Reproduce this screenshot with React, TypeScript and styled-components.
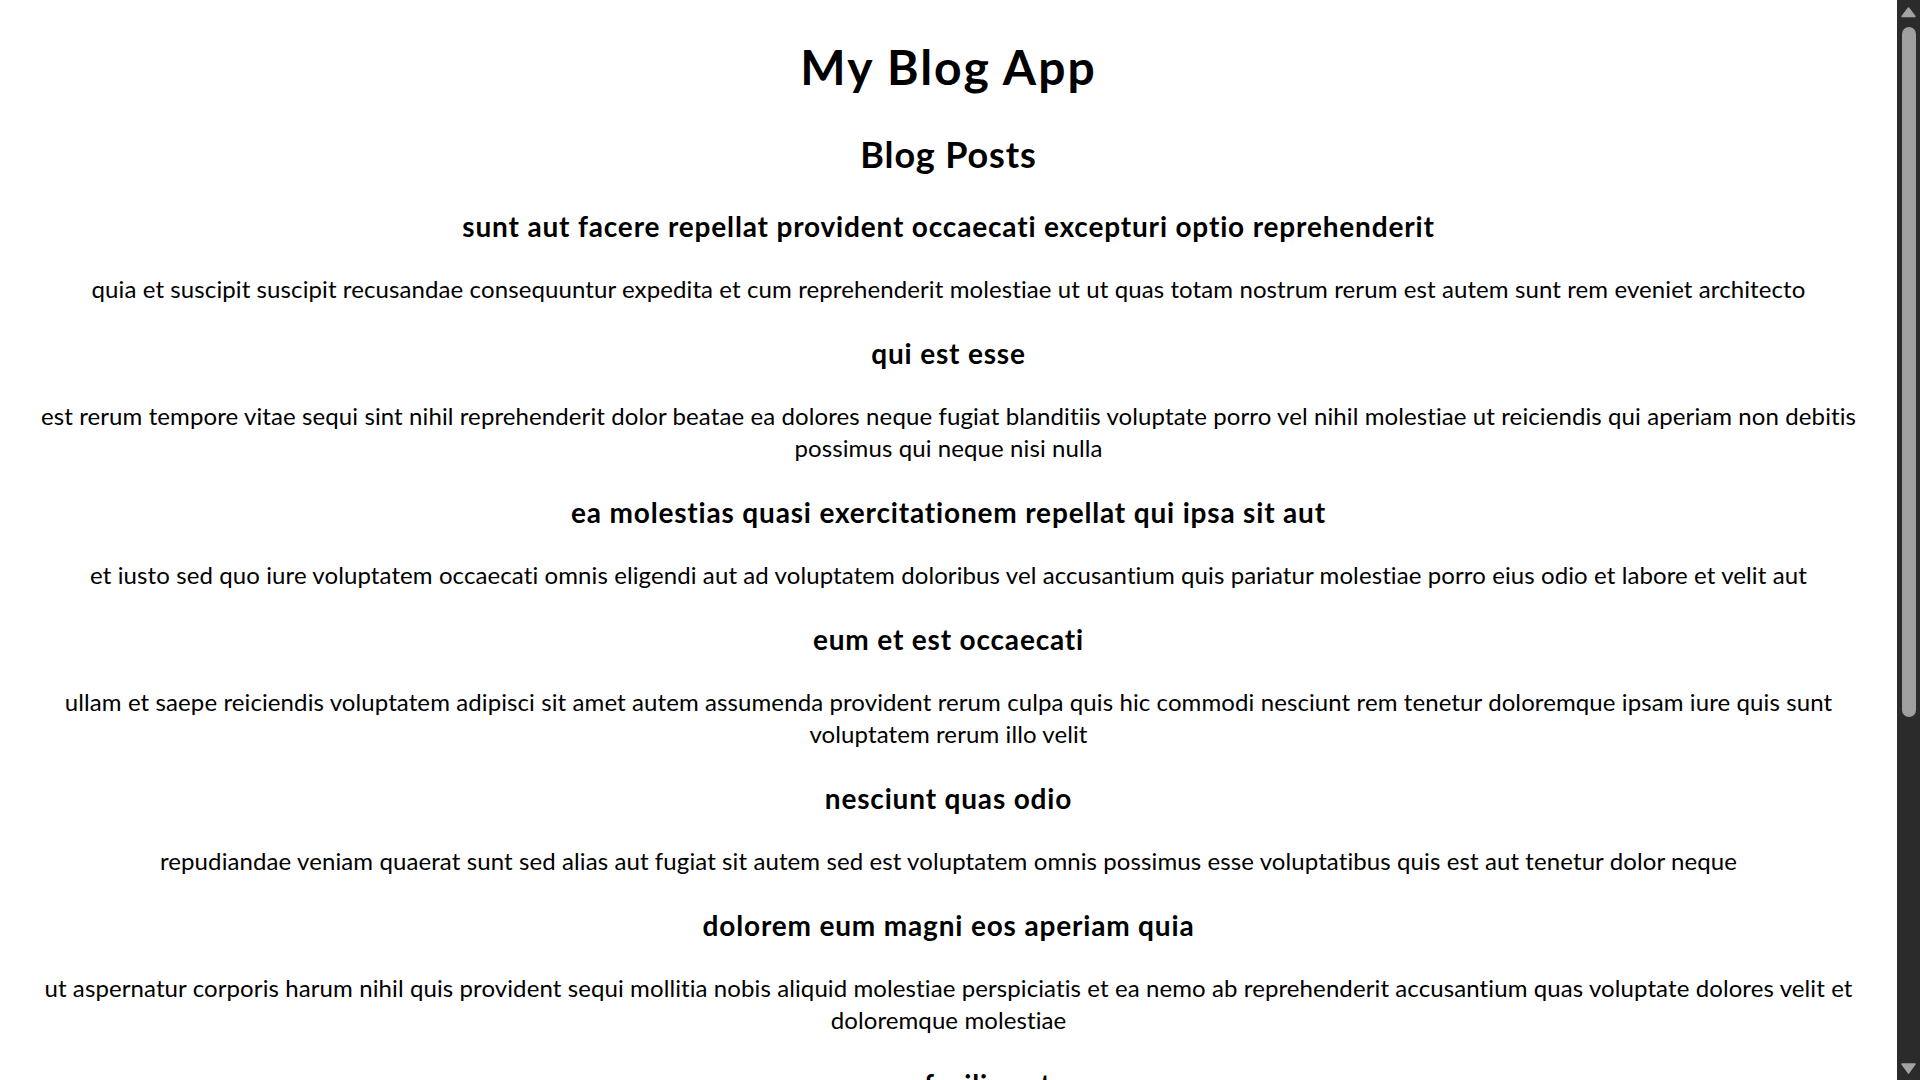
import React from "react";
import styled, { createGlobalStyle } from "styled-components";

const GlobalStyle = createGlobalStyle`
  html, body {
    margin: 0;
    padding: 0;
    background: #ffffff;
  }
  body {
    font-family: Lato, "Noto Sans", sans-serif;
    color: #000000;
  }
`;

const Page = styled.div`
  padding: 0 35px 12px 12px;
  text-align: center;
`;

const AppTitle = styled.h1`
  font-size: 48px;
  line-height: 64px;
  font-weight: 700;
  letter-spacing: 2px;
  margin: 35px 0 31px;
`;

const SectionTitle = styled.h2`
  font-size: 36px;
  line-height: 48px;
  font-weight: 700;
  letter-spacing: 0.85px;
  margin: 30px 0;
`;

const PostList = styled.div``;

const Post = styled.article``;

const PostTitle = styled.h3`
  font-size: 28px;
  line-height: 37px;
  font-weight: 700;
  letter-spacing: 0.83px;
  margin: 30px 0 28px;
`;

const PostBody = styled.p`
  font-size: 24px;
  line-height: 32px;
  letter-spacing: 0.1px;
  margin: 24px 0;
`;

/* imitation of the browser's dark scrollbar, lying over the right edge */
const ScrollRail = styled.div`
  position: fixed;
  top: 0;
  right: 0;
  width: 23px;
  height: 100vh;
  background: #2b2b2b;
  display: flex;
  flex-direction: column;
`;

const ScrollButton = styled.div`
  height: 23px;
  flex: none;
  display: flex;
  svg {
    display: block;
  }
`;

const ScrollThumb = styled.div<{ $length: number }>`
  flex: none;
  margin: 4px 4px 0 5px;
  height: ${(p) => p.$length}px;
  border-radius: 7px;
  background: #9f9f9f;
`;

const ScrollSpacer = styled.div`
  flex: 1;
`;

const posts = [
  {
    id: 1,
    title: "sunt aut facere repellat provident occaecati excepturi optio reprehenderit",
    body: "quia et suscipit suscipit recusandae consequuntur expedita et cum reprehenderit molestiae ut ut quas totam nostrum rerum est autem sunt rem eveniet architecto",
  },
  {
    id: 2,
    title: "qui est esse",
    body: "est rerum tempore vitae sequi sint nihil reprehenderit dolor beatae ea dolores neque fugiat blanditiis voluptate porro vel nihil molestiae ut reiciendis qui aperiam non debitis possimus qui neque nisi nulla",
  },
  {
    id: 3,
    title: "ea molestias quasi exercitationem repellat qui ipsa sit aut",
    body: "et iusto sed quo iure voluptatem occaecati omnis eligendi aut ad voluptatem doloribus vel accusantium quis pariatur molestiae porro eius odio et labore et velit aut",
  },
  {
    id: 4,
    title: "eum et est occaecati",
    body: "ullam et saepe reiciendis voluptatem adipisci sit amet autem assumenda provident rerum culpa quis hic commodi nesciunt rem tenetur doloremque ipsam iure quis sunt voluptatem rerum illo velit",
  },
  {
    id: 5,
    title: "nesciunt quas odio",
    body: "repudiandae veniam quaerat sunt sed alias aut fugiat sit autem sed est voluptatem omnis possimus esse voluptatibus quis est aut tenetur dolor neque",
  },
  {
    id: 6,
    title: "dolorem eum magni eos aperiam quia",
    body: "ut aspernatur corporis harum nihil quis provident sequi mollitia nobis aliquid molestiae perspiciatis et ea nemo ab reprehenderit accusantium quas voluptate dolores velit et doloremque molestiae",
  },
  {
    id: 7,
    title: "magnam facilis autem",
    body: "dolore placeat quibusdam ea quo vitae magni quis enim qui quis quo nemo aut saepe quidem repellat excepturi ut quia sunt ut sequi eos ea sed quas",
  },
  {
    id: 8,
    title: "dolorem dolore est ipsam",
    body: "dignissimos aperiam dolorem qui eum facilis quibusdam animi sint suscipit qui sint possimus cum quaerat magni maiores excepturi ipsam ut commodi dolor voluptatum modi aut vitae",
  },
  {
    id: 9,
    title: "nesciunt iure omnis dolorem tempora et accusantium",
    body: "consectetur animi nesciunt iure dolore enim quia ad veniam autem ut quam aut nobis et est aut quod aut provident voluptas autem voluptas",
  },
  {
    id: 10,
    title: "optio molestias id quia eum",
    body: "quo et expedita modi cum officia vel magni doloribus qui repudiandae vero nisi sit quos veniam quod sed accusamus veritatis error",
  },
];

function Scrollbar() {
  return (
    <ScrollRail aria-hidden="true">
      <ScrollButton>
        <svg width="23" height="23" viewBox="0 0 23 23">
          <path
            d="M5 16.5 L18 16.5 L11.5 8 Z"
            fill="#a3a3a3"
            stroke="#a3a3a3"
            strokeWidth="1.5"
            strokeLinejoin="round"
          />
        </svg>
      </ScrollButton>
      <ScrollThumb $length={690} />
      <ScrollSpacer />
      <ScrollButton>
        <svg width="23" height="23" viewBox="0 0 23 23">
          <path
            d="M5 7 L18 7 L11.5 16 Z"
            fill="#a3a3a3"
            stroke="#a3a3a3"
            strokeWidth="1.5"
            strokeLinejoin="round"
          />
        </svg>
      </ScrollButton>
    </ScrollRail>
  );
}

export default function App() {
  return (
    <>
      <GlobalStyle />
      <Page>
        <AppTitle>My Blog App</AppTitle>
        <SectionTitle>Blog Posts</SectionTitle>
        <PostList>
          {posts.map((post) => (
            <Post key={post.id}>
              <PostTitle>{post.title}</PostTitle>
              <PostBody>{post.body}</PostBody>
            </Post>
          ))}
        </PostList>
      </Page>
      <Scrollbar />
    </>
  );
}
